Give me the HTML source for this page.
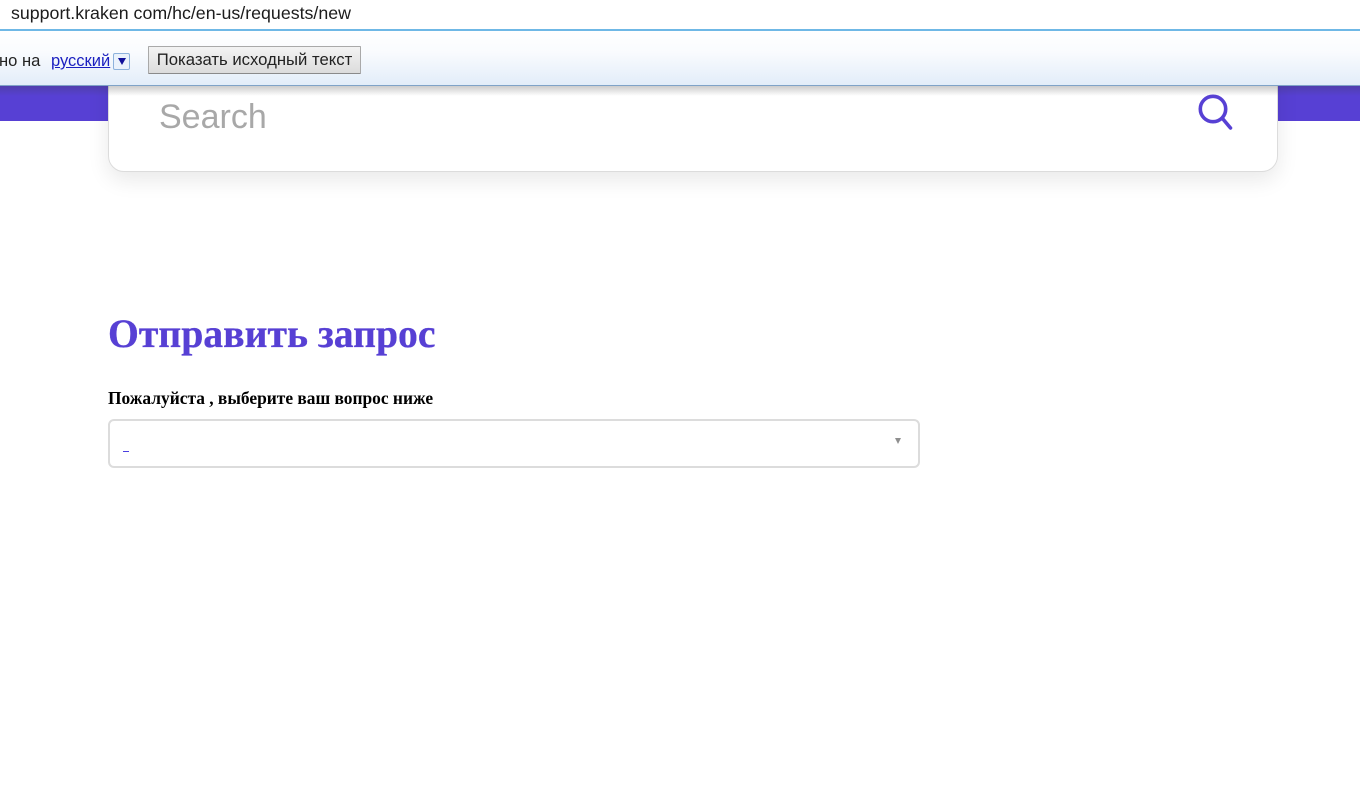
<!DOCTYPE html>
<html><head><meta charset="utf-8">
<style>
html,body{margin:0;padding:0;width:1360px;height:811px;overflow:hidden;background:#fff;}
body{position:relative;font-family:"Liberation Sans",sans-serif;}
div,span,a{position:absolute;white-space:nowrap;}
#url{left:11px;top:3px;font-size:17.8px;line-height:20px;color:#1c1c1c;}
#line{left:0;top:29px;width:1360px;height:2px;background:#6fb8e6;}
#bar{left:0;top:31px;width:1360px;height:54px;background:linear-gradient(#ffffff 0%,#f9fbfe 40%,#e2edf9 100%);border-bottom:1px solid #7fa3c8;}
#shadow{left:0;top:86px;width:1360px;height:10px;background:linear-gradient(rgba(60,60,60,.26),rgba(60,60,60,0));z-index:5;}
#no{left:-1px;top:51px;font-size:16.6px;line-height:20px;color:#222;}
#ru{left:51px;top:51px;font-size:16.5px;line-height:20px;color:#1a1fc0;text-decoration:underline;}
#dd{left:113px;top:53px;width:15px;height:15px;border:1px solid #8db2dc;border-radius:2px;background:#eaf2fc;}
#dd i{position:absolute;left:3.5px;top:4px;width:0;height:0;border-left:4px solid transparent;border-right:4px solid transparent;border-top:7px solid #10109a;}
#btn{left:148px;top:46px;width:211px;height:26px;border:1px solid #a9a9a9;border-bottom-color:#8a8a8a;border-radius:1px;background:linear-gradient(#f3f3f3,#dcdcdc);font-size:16.7px;line-height:25px;text-align:center;color:#222;}
#purple{left:0;top:86px;width:1360px;height:35px;background:#5740d4;}
#card{left:108px;top:60px;width:1168px;height:110px;background:#fff;border:1px solid #dcdcdc;border-radius:0 0 16px 16px;box-shadow:0 8px 22px rgba(0,0,0,.09);}
#search{left:159px;top:97px;font-size:34px;line-height:40px;color:#a8a8a8;font-family:"Liberation Sans",sans-serif;font-weight:normal;}
#icon{left:1196px;top:94px;}
h1{position:absolute;margin:0;left:108px;top:311px;font:bold 39.7px/46px "Liberation Serif",serif;color:#5740d4;white-space:nowrap;-webkit-text-stroke:.3px #5740d4;}
#label{left:108px;top:388px;font:bold 17.4px/20px "Liberation Serif",serif;color:#000;}
#sel{left:108px;top:419px;width:808px;height:45px;border:2px solid #dcdcdc;border-radius:6px;background:#fff;}
#dash{left:123px;top:451px;width:6px;height:1px;background:#4a3fe0;}
#arr{left:895px;top:438px;width:0;height:0;border-left:3.5px solid transparent;border-right:3.5px solid transparent;border-top:6px solid #8f8f8f;}
</style></head>
<body>
<div id="purple"></div>
<div id="card"></div>
<div id="search">Search</div>
<svg id="icon" width="38" height="38" viewBox="0 0 38 38" style="position:absolute"><circle cx="17" cy="15" r="12.7" fill="none" stroke="#5740d4" stroke-width="3.6"/><path d="M26.5 24.5 L34.5 34" stroke="#5740d4" stroke-width="3.6" stroke-linecap="round" fill="none"/></svg>
<div id="url">support.kraken com/hc/en-us/requests/new</div>
<div id="line"></div>
<div id="bar"></div>
<div id="shadow"></div>
<div id="no">но на</div>
<a id="ru">русский</a>
<div id="dd"><i></i></div>
<div id="btn">Показать исходный текст</div>
<h1>Отправить запрос</h1>
<div id="label">Пожалуйста , выберите ваш вопрос ниже</div>
<div id="sel"></div>
<div id="dash"></div>
<div id="arr"></div>
</body></html>
